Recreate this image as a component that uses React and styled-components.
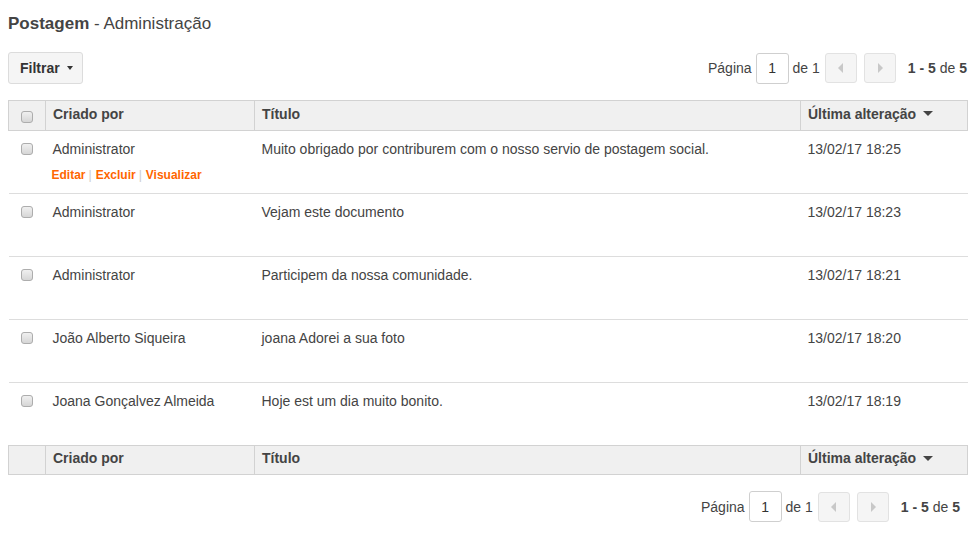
import React from "react";
import styled, { createGlobalStyle } from "styled-components";

const Global = createGlobalStyle`
  html, body { margin: 0; padding: 0; background: #fff; }
  body { font-family: "Liberation Sans", Arial, sans-serif; color: #444; font-size: 14px; }
`;

const Page = styled.div`
  padding: 0 8px 8px;
`;

const Title = styled.h1`
  margin: 14px 0 0;
  font-size: 17px;
  line-height: 20px;
  font-weight: normal;
  color: #444;
  b { font-weight: bold; }
`;

const Toolbar = styled.div`
  display: flex;
  align-items: center;
  justify-content: space-between;
  margin-top: 18px;
`;

const FilterButton = styled.button`
  display: inline-flex;
  align-items: center;
  gap: 7px;
  height: 32px;
  width: 75px;
  padding: 0 0 0 11px;
  font-family: inherit;
  font-size: 14px;
  font-weight: bold;
  color: #333;
  background: #f5f5f5;
  border: 1px solid #dcdcdc;
  border-radius: 3px;
`;

const Pager = styled.div`
  display: flex;
  align-items: center;
  font-size: 14px;
  color: #444;
  padding-right: ${(p) => p.$pr || 0}px;
`;

const PageInput = styled.div`
  width: 33px;
  height: 31px;
  box-sizing: border-box;
  margin: 0 4px;
  border: 1px solid #cfcfcf;
  border-radius: 3px;
  display: flex;
  align-items: center;
  justify-content: center;
  color: #333;
`;

const PagerButton = styled.div`
  width: 32px;
  height: 30px;
  box-sizing: border-box;
  margin-left: ${(p) => p.$ml}px;
  border: 1px solid #e2e2e2;
  border-radius: 3px;
  background: #f5f5f5;
  display: flex;
  align-items: center;
  justify-content: center;
`;

const Count = styled.span`
  margin-left: 12px;
  b { font-weight: bold; color: #444; }
`;

const Table = styled.table`
  margin-top: 16px;
  width: 959px;
  border-collapse: collapse;
  table-layout: fixed;
`;

const HeadRow = styled.tr`
  height: ${(p) => p.$h}px;
`;

const HeadCell = styled.th`
  padding: 0 7px 4px;
  text-align: left;
  font-size: 14px;
  font-weight: bold;
  color: #444;
  background: #f0f0f0;
  border: 1px solid #d2d2d2;
  vertical-align: middle;
  white-space: nowrap;
`;

const CheckHead = styled(HeadCell)`
  text-align: center;
  padding: 2px 0 0;
  line-height: 0;
`;

const Row = styled.tr`
  height: 63px;
  border-bottom: 1px solid #dddddd;
`;

const Cell = styled.td`
  vertical-align: top;
  padding: 8px 7px 0;
  font-size: 14px;
  line-height: 20px;
  color: #444;
  white-space: nowrap;
`;

const CheckCell = styled(Cell)`
  text-align: center;
  padding: 12px 0 0;
  line-height: 0;
`;

const Box = styled.span`
  display: inline-block;
  width: 12px;
  height: 12px;
  box-sizing: border-box;
  border: 1px solid #adadad;
  border-radius: 3px;
  background: linear-gradient(#f0f0f0, #d6d6d6);
`;

const Actions = styled.div`
  margin-top: 7px;
  margin-left: -1px;
  font-size: 12px;
  line-height: 18px;
  font-weight: bold;
`;

const Link = styled.a`
  color: #ff6600;
  text-decoration: none;
`;

const Sep = styled.span`
  color: #cccccc;
  font-weight: normal;
  margin: 0 4px 0 3px;
`;

const SortCaret = styled.span`
  display: inline-block;
  margin-left: 7px;
  vertical-align: middle;
  width: 0;
  height: 0;
  border-left: 5px solid transparent;
  border-right: 5px solid transparent;
  border-top: 5px solid #444;
  position: relative;
  top: -1px;
`;

const BottomBar = styled.div`
  display: flex;
  justify-content: flex-end;
  margin-top: 16px;
`;

const Arrow = ({ dir }) => (
  <svg width="6" height="10" viewBox="0 0 6 10">
    {dir === "left" ? (
      <path d="M5 0 L0 5 L5 10 Z" fill="#c8c8c8" />
    ) : (
      <path d="M1 0 L6 5 L1 10 Z" fill="#c8c8c8" />
    )}
  </svg>
);

const Caret = () => (
  <svg width="6" height="4" viewBox="0 0 6 4">
    <path d="M0 0 H6 L3 4 Z" fill="#333" />
  </svg>
);

const rows = [
  ["Administrator", "Muito obrigado por contriburem com o nosso servio de postagem social.", "13/02/17 18:25", true],
  ["Administrator", "Vejam este documento", "13/02/17 18:23"],
  ["Administrator", "Participem da nossa comunidade.", "13/02/17 18:21"],
  ["João Alberto Siqueira", "joana Adorei a sua foto", "13/02/17 18:20"],
  ["Joana Gonçalvez Almeida", "Hoje est um dia muito bonito.", "13/02/17 18:19"],
];

const PagerBlock = ({ pr }) => (
  <Pager $pr={pr}>
    Página
    <PageInput>1</PageInput>
    de 1
    <PagerButton $ml={5}><Arrow dir="left" /></PagerButton>
    <PagerButton $ml={7}><Arrow dir="right" /></PagerButton>
    <Count><b>1 - 5</b> de <b>5</b></Count>
  </Pager>
);

const HeaderRow = ({ check, h }) => (
  <HeadRow $h={h}>
    <CheckHead>{check && <Box />}</CheckHead>
    <HeadCell>Criado por</HeadCell>
    <HeadCell>Título</HeadCell>
    <HeadCell>Última alteração<SortCaret /></HeadCell>
  </HeadRow>
);

export default function App() {
  return (
    <Page>
      <Global />
      <Title><b>Postagem</b> - Administração</Title>
      <Toolbar>
        <FilterButton>Filtrar <Caret /></FilterButton>
        <PagerBlock />
      </Toolbar>
      <Table>
        <colgroup>
          <col style={{ width: 37 }} />
          <col style={{ width: 209 }} />
          <col style={{ width: 546 }} />
          <col style={{ width: 167 }} />
        </colgroup>
        <thead>
          <HeaderRow check h={30} />
        </thead>
        <tbody>
          {rows.map(([who, title, date, actions], i) => (
            <Row key={i}>
              <CheckCell><Box /></CheckCell>
              <Cell>
                {who}
                {actions && (
                  <Actions>
                    <Link href="#">Editar</Link>
                    <Sep>|</Sep>
                    <Link href="#">Excluir</Link>
                    <Sep>|</Sep>
                    <Link href="#">Visualizar</Link>
                  </Actions>
                )}
              </Cell>
              <Cell>{title}</Cell>
              <Cell>{date}</Cell>
            </Row>
          ))}
        </tbody>
        <tfoot>
          <HeaderRow h={29} />
        </tfoot>
      </Table>
      <BottomBar>
        <PagerBlock pr={7} />
      </BottomBar>
    </Page>
  );
}
